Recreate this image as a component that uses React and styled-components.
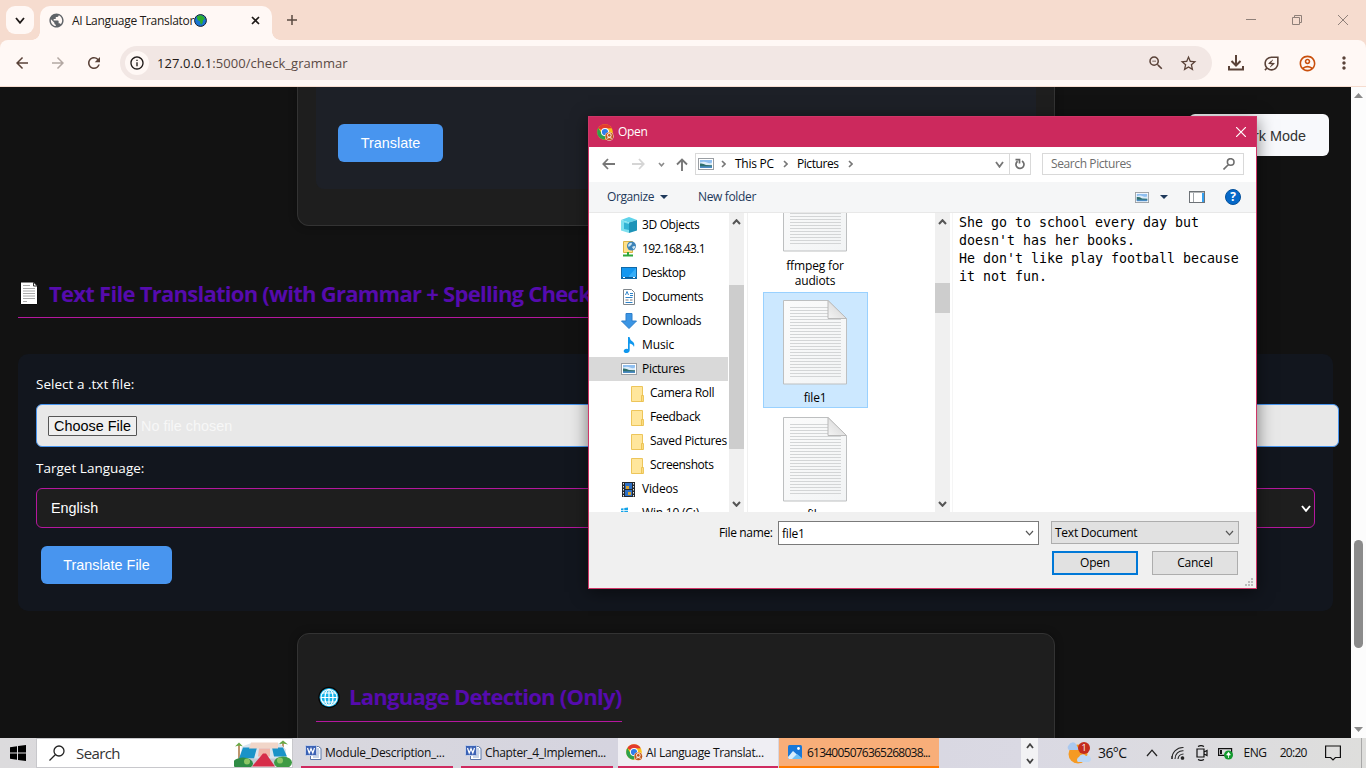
import React from "react";
import styled, { createGlobalStyle, css } from "styled-components";
import {
  MdArrowBack,
  MdArrowForward,
  MdRefresh,
  MdStarBorder,
  MdZoomOut,
  MdPublic,
  MdOutlineEnergySavingsLeaf,
  MdInfoOutline,
  MdOutlineAccountCircle,
  MdMoreVert,
} from "react-icons/md";

const Global = createGlobalStyle`
  * { box-sizing: border-box; }
  body { margin: 0; overflow: hidden; background: #121212; }
  svg { display: block; flex: none; }
`;

const ui = `"Segoe UI", "Open Sans", "Noto Sans", sans-serif`;
const arial = `Arial, "Liberation Sans", sans-serif`;

const Screen = styled.div`
  position: relative;
  width: 1366px;
  height: 768px;
  overflow: hidden;
  display: flex;
  flex-direction: column;
  font-family: ${ui};
  font-size: 12px;
  color: #000;
`;

const Text = styled.span`
  white-space: nowrap;
  flex: none;
  font-size: ${(p) => p.$size || 12}px;
  letter-spacing: ${(p) => p.$ls || 0}px;
  color: ${(p) => p.$color || "inherit"};
  margin-left: ${(p) => p.$ml || 0}px;
  padding-bottom: ${(p) => p.$lift || 0}px;
`;

/* ---------- browser chrome ---------- */
const TabStrip = styled.div`
  height: 40px;
  flex: none;
  display: flex;
  background: #f6dccf;
`;
const TabSearch = styled.div`
  margin: 6px 0 0 6px;
  width: 28px;
  height: 28px;
  border-radius: 9px;
  background: #fff8f5;
  display: grid;
  place-items: center;
`;
const Tab = styled.div`
  position: relative;
  margin: 6px 0 0 6px;
  width: 232px;
  height: 34px;
  padding-left: 8px;
  border-radius: 10px 10px 0 0;
  background: #fff8f5;
  display: flex;
  align-items: center;
  padding-bottom: 6px;
  &::before,
  &::after {
    content: "";
    position: absolute;
    bottom: 0;
    width: 8px;
    height: 8px;
  }
  &::before {
    left: -8px;
    background: radial-gradient(circle at 0 0, transparent 7.5px, #fff8f5 8px);
  }
  &::after {
    right: -8px;
    background: radial-gradient(circle at 100% 0, transparent 7.5px, #fff8f5 8px);
  }
`;
const TabClose = styled.div`
  margin-left: auto;
  margin-right: 12px;
`;
const NewTab = styled.div`
  margin: 14px 0 0 14px;
`;
const WindowButtons = styled.div`
  margin: 15px 18px 0 auto;
  display: flex;
  gap: 36px;
`;
const ToolbarBack = styled.div`
  height: 47px;
  flex: none;
  background: #f6dccf;
`;
const Toolbar = styled.div`
  height: 46px;
  border-radius: 8px 8px 0 0;
  background: #fff8f5;
  display: flex;
  align-items: center;
  padding-left: 13px;
  color: #5a4238;
`;
const NavIcons = styled.div`
  display: flex;
  gap: 18px;
  width: 107px;
`;
const Omnibox = styled.div`
  width: 1092px;
  height: 34px;
  border-radius: 17px;
  background: #f2e7e4;
  display: flex;
  align-items: center;
  padding: 0 14px 0 5px;
`;
const InfoCircle = styled.div`
  width: 24px;
  height: 24px;
  border-radius: 12px;
  background: #fff8f5;
  display: grid;
  place-items: center;
  color: #1f1a18;
`;
const OmniActions = styled.div`
  margin-left: auto;
  display: flex;
  align-items: center;
  gap: 14px;
`;
const ToolActions = styled.div`
  margin-left: 15px;
  display: flex;
  align-items: center;
  gap: 17px;
`;

/* ---------- page ---------- */
const Viewport = styled.div`
  height: 651px;
  flex: none;
  display: flex;
  background: #121212;
`;
const Page = styled.div`
  width: 1351px;
  display: flex;
  flex-direction: column;
  overflow: hidden;
`;
const PageScroll = styled.div`
  width: 15px;
  background: #fcfcfc;
  display: flex;
  flex-direction: column;
  align-items: center;
  padding: 6px 0;
`;
const PageThumb = styled.div`
  margin-top: 442px;
  margin-bottom: auto;
  width: 9px;
  height: 108px;
  border-radius: 5px;
  background: #8b8b8b;
`;
const Card = styled.section`
  margin-left: 297px;
  width: 758px;
  flex: none;
  background: #1e1e1e;
  border: 1px solid #333;
  padding: 0 18px;
  box-shadow: 0 0 8px rgba(0, 0, 0, 0.3);
  ${(p) =>
    p.$lower
      ? css`
          margin-top: 22px;
          height: 140px;
          border-radius: 12px 12px 0 0;
          padding-top: 42px;
        `
      : css`
          height: 139px;
          border-top: 0;
          border-radius: 0 0 12px 12px;
        `}
`;
const CardPanel = styled.div`
  height: 102px;
  border-radius: 0 0 8px 8px;
  background: #1d2027;
  padding: 37px 22px;
`;
const PrimaryButton = styled.button`
  display: block;
  height: 38px;
  width: ${(p) => p.$w}px;
  border: 0;
  padding: 0;
  border-radius: 6px;
  background: #4895ef;
  color: #fff;
  font: 14.4px ${arial};
`;
const Heading = styled.h2`
  margin: ${(p) => p.$m || "0"};
  width: ${(p) => p.$w}px;
  height: ${(p) => p.$h}px;
  flex: none;
  border-bottom: 1px solid ${(p) => p.$line || "#b5179e"};
  display: flex;
  align-items: flex-start;
  color: #560bad;
  font-size: 22px;
  font-weight: 700;
  line-height: 30px;
`;
const HeadingText = styled.div`
  margin-top: ${(p) => p.$mt}px;
`;
const FilePanel = styled.section`
  margin: 36px 0 0 18px;
  width: 1315px;
  height: 257px;
  flex: none;
  border-radius: 10px;
  background: #12161e;
  padding: 20px 18px;
  color: #fff;
  display: flex;
  flex-direction: column;
`;
const FieldLabel = styled.label`
  height: 20px;
  line-height: 20px;
  font-size: 13.5px;
  letter-spacing: ${(p) => p.$ls}px;
  margin-top: ${(p) => p.$mt || 0}px;
`;
const FileInput = styled.div`
  margin-top: 10px;
  width: 1303px;
  height: 43px;
  flex: none;
  border: 1px solid #4895ef;
  border-radius: 6px;
  background: #e8e8e8;
  display: flex;
  align-items: center;
  padding-left: 11px;
  font: 14.4px ${arial};
  color: #f7f7f7;
`;
const ChooseButton = styled.span`
  width: 89px;
  height: 20px;
  margin-right: 4px;
  border: 1px solid #555;
  border-radius: 1px;
  background: #efefef;
  color: #000;
  text-align: center;
  line-height: 18px;
  white-space: nowrap;
`;
const Select = styled.div`
  margin: 10px 0 18px;
  width: 1279px;
  height: 40px;
  flex: none;
  border: 1px solid #b5179e;
  border-radius: 6px;
  background: #1e1e1e;
  display: flex;
  align-items: center;
  justify-content: space-between;
  padding: 0 3px 0 14px;
  font: 14.4px ${arial};
`;
const FileSubmit = styled.div`
  padding-left: 5px;
`;
const ModeButton = styled.button`
  position: absolute;
  left: 1189px;
  top: 114px;
  width: 140px;
  height: 42px;
  padding: 2px 23px 0 0;
  text-align: right;
  border: 0;
  border-radius: 6px;
  background: #f8f9fc;
  color: #333;
  font: 14.4px ${arial};
`;

/* ---------- file dialog ---------- */
const Dialog = styled.div`
  position: absolute;
  left: 588px;
  top: 116px;
  width: 669px;
  height: 473px;
  border: 1px solid #cf3567;
  background: #fff;
  display: flex;
  flex-direction: column;
  box-shadow: 0 3px 16px rgba(0, 0, 0, 0.5);
`;
const TitleBar = styled.div`
  height: 30px;
  flex: none;
  background: #cc295d;
  color: #fff;
  display: flex;
  align-items: center;
  padding: 0 10px 0 8px;
`;
const Push = styled.div`
  margin-left: auto;
`;
const NavRow = styled.div`
  height: 35px;
  flex: none;
  display: flex;
  align-items: center;
  padding: 0 12px 1px 13px;
`;
const Arrows = styled.div`
  width: 93px;
  display: flex;
  align-items: center;
`;
const AddressBox = styled.div`
  width: 315px;
  height: 22px;
  border: 1px solid #d9d9d9;
  display: flex;
  align-items: center;
  padding: 0 5px 0 2px;
`;
const RefreshBox = styled.div`
  width: 21px;
  height: 22px;
  border: 1px solid #d9d9d9;
  border-left: 0;
  display: grid;
  place-items: center;
`;
const SearchBox = styled.div`
  margin-left: auto;
  width: 202px;
  height: 22px;
  border: 1px solid #d9d9d9;
  display: flex;
  align-items: center;
  padding: 0 8px;
  color: #6d6d6d;
`;
const CommandBar = styled.div`
  height: 31px;
  flex: none;
  background: #f5f6f7;
  border-bottom: 1px solid #e8e8e8;
  display: flex;
  align-items: center;
  padding: 0 15px 0 18px;
  color: #1e395b;
`;
const CommandIcons = styled.div`
  margin-left: auto;
  display: flex;
  align-items: center;
`;
const Body = styled.div`
  height: 299px;
  flex: none;
  display: flex;
  overflow: hidden;
`;
const Tree = styled.div`
  width: 139px;
  overflow: hidden;
  margin-right: 1px;
`;
const TreeRow = styled.div`
  height: 24px;
  display: flex;
  align-items: center;
  padding-left: ${(p) => (p.$child ? 42 : 32)}px;
  background: ${(p) => (p.$active ? "#d9d9d9" : "transparent")};
`;
const TreeIcon = styled.span`
  width: ${(p) => (p.$child ? 19 : 21)}px;
  display: flex;
`;
const ScrollTrack = styled.div`
  width: 15px;
  background: #f0f0f0;
  display: flex;
  flex-direction: column;
  align-items: center;
  padding: 6px 0 5px;
`;
const ScrollThumb = styled.div`
  margin-top: ${(p) => p.$top}px;
  margin-bottom: auto;
  width: 15px;
  height: ${(p) => p.$h}px;
  background: #cdcdcd;
`;
const Files = styled.div`
  margin-left: 3px;
  border-left: 1px solid #f0f0f0;
  width: 188px;
  padding-left: 15px;
  overflow: hidden;
`;
const FileTile = styled.div`
  width: 105px;
  height: ${(p) => p.$h}px;
  display: flex;
  flex-direction: column;
  align-items: flex-start;
  border: ${(p) => (p.$first ? 0 : 1)}px solid ${(p) => (p.$active ? "#99d1ff" : "transparent")};
  background: ${(p) => (p.$active ? "#cce8ff" : "transparent")};
  padding: ${(p) => p.$pt || 0}px 0 0 ${(p) => (p.$first ? 20 : 19)}px;
  margin-top: ${(p) => p.$mt || 0}px;
`;
const TileName = styled.div`
  width: 64px;
  margin-top: ${(p) => (p.$mt === undefined ? 5 : p.$mt)}px;
  font-size: 12px;
  line-height: 15px;
  letter-spacing: ${(p) => p.$ls || -0.2}px;
  text-align: center;
  white-space: pre;
`;
const Preview = styled.pre`
  margin: 0 0 0 2px;
  border-left: 1px solid #f5f5f5;
  padding: 1px 0 0 6px;
  flex: 1;
  font: 13.29px/18px Consolas, "DejaVu Sans Mono", monospace;
  color: #000;
`;
const Footer = styled.div`
  flex: 1;
  background: #f0f0f0;
  display: flex;
  flex-direction: column;
  padding: 9px 17px 0 130px;
  position: relative;
`;
const FooterRow = styled.div`
  display: flex;
  align-items: flex-start;
  height: 30px;
`;
const NameLabel = styled.div`
  width: 59px;
  line-height: 23px;
`;
const Combo = styled.div`
  width: ${(p) => p.$w}px;
  height: ${(p) => p.$h}px;
  border: 1px solid ${(p) => (p.$grey ? "#adadad" : "#7a7a7a")};
  background: ${(p) => (p.$grey ? "#e1e1e1" : "#fff")};
  margin-left: ${(p) => (p.$grey ? 12 : 0)}px;
  display: flex;
  align-items: center;
  justify-content: space-between;
  padding: 0 4px 0 3px;
`;
const ButtonRow = styled.div`
  display: flex;
  justify-content: flex-end;
  gap: 14px;
  padding-right: 1px;
`;
const WinButton = styled.button`
  width: 86px;
  height: 24px;
  padding: 0 0 2px;
  background: #e1e1e1;
  border: ${(p) => (p.$primary ? "2px solid #0078d7" : "1px solid #adadad")};
  font: 12px ${ui};
  letter-spacing: -0.25px;
  color: #000;
`;
const Grip = styled.div`
  position: absolute;
  right: 3px;
  bottom: 2px;
`;

/* ---------- taskbar ---------- */
const Taskbar = styled.div`
  height: 30px;
  flex: none;
  background: linear-gradient(90deg, #dcdbdd, #d5d4df 45%, #dad9e3 75%, #dededc);
  display: flex;
`;
const Start = styled.div`
  width: 36px;
  padding: 7px 0 0 10px;
`;
const TaskSearch = styled.div`
  width: 257px;
  height: 30px;
  background: #fff;
  border: 1px solid #c8c8cc;
  display: flex;
  align-items: center;
  padding-left: 12px;
  color: #333;
`;
const Task = styled.div`
  width: ${(p) => p.$w}px;
  margin-left: ${(p) => p.$ml}px;
  border-bottom: 2px solid ${(p) => p.$line || "#cf2a60"};
  background: ${(p) => p.$bg || "transparent"};
  display: flex;
  align-items: center;
  padding-left: ${(p) => p.$pl || 4}px;
  color: #111;
`;
const UpDown = styled.div`
  margin-left: 82px;
  width: 17px;
  background: #f2f2f4;
  display: flex;
  flex-direction: column;
  align-items: center;
  justify-content: space-between;
  padding: 5px 0 4px;
`;
const Tray = styled.div`
  margin-left: 28px;
  display: flex;
  align-items: center;
  flex: 1;
  color: #111;
`;
const TrayItem = styled.div`
  margin-left: ${(p) => p.$ml || 0}px;
`;
const ShowDesktop = styled.div`
  margin-left: auto;
  width: 5px;
  align-self: stretch;
  border-left: 1px solid #a8a8a8;
`;

/* ---------- drawings ---------- */
const Stroke = ({ w = 16, h = 16, d, c = "#555", s = 1.5, vb, fill = "none" }) => (
  <svg width={w} height={h} viewBox={vb || `0 0 ${w} ${h}`} fill={fill} stroke={c} strokeWidth={s}>
    <path d={d} />
  </svg>
);
const Chevron = ({ up, c = "#555", s = 2, w = 9, h = 6 }) => (
  <Stroke w={w} h={h} c={c} s={s} d={up ? `M1 ${h - 1}L${w / 2} 1.2L${w - 1} ${h - 1}` : `M1 1L${w / 2} ${h - 1.2}L${w - 1} 1`} />
);
const PictureIcon = ({ w = 16, h = 12 }) => (
  <svg width={w} height={h} viewBox="0 0 16 12" preserveAspectRatio="none">
    <rect x=".5" y=".5" width="15" height="11" fill="#fff" stroke="#9a9ea3" />
    <rect x="2" y="2" width="12" height="8" fill="#8fbff0" />
    <path d="M2 4.500q4-1.500 7 0t5 0V8H2z" fill="#dcecf9" />
    <path d="M2 5.500q3-.5 6 1.500l6 .3V9H2z" fill="#2f6f6c" />
    <path d="M2 8.300h12V10H2z" fill="#4c8cc4" />
  </svg>
);
const ChromeIcon = () => (
  <svg width="17" height="17" viewBox="0 0 17 17">
    <circle cx="8" cy="8" r="7.800" fill="#fbc116" />
    <path d="M8 8L1.200 4.200A7.800 7.800 0 0 1 14.800 4.200L8 4.500z" fill="#e33b2e" />
    <path d="M1.250 4.100A7.800 7.800 0 0 0 7.500 15.800L10.600 10.500 5 10z" fill="#2da14c" />
    <circle cx="8" cy="8" r="4" fill="#fff" />
    <circle cx="8" cy="8" r="3.100" fill="#2f7de9" />
    <circle cx="12.300" cy="12.300" r="4.400" fill="#f5e6d8" />
    <circle cx="12.300" cy="12.300" r="3.900" fill="#c2571c" />
    <circle cx="12.300" cy="11.300" r="1.900" fill="none" stroke="#fff" strokeWidth=".9" />
    <path d="M9.800 14.300q2.500-1.600 5 0" stroke="#fff" fill="none" strokeWidth=".9" />
  </svg>
);
const DocumentSheet = ({ h = 85 }) => (
  <svg width="64" height={h} viewBox={`0 ${85 - h} 64 ${h}`}>
    <defs>
      <linearGradient id="sheet" x1="0" y1="0" x2="1" y2="1">
        <stop offset="0" stopColor="#fbfbfb" />
        <stop offset="1" stopColor="#f2f4f5" />
      </linearGradient>
      <linearGradient id="fold" x1="0" y1="1" x2="1" y2="0">
        <stop offset="0" stopColor="#f4f4f4" />
        <stop offset="1" stopColor="#cfcfcf" />
      </linearGradient>
    </defs>
    <path d="M.500.500H45L63.500 19V84H.500z" fill="url(#sheet)" stroke="#bdbfc0" />
    {Array.from({ length: 24 }, (_, i) => (
      <path key={i} d={`M7 ${7.5 + i * 3}H${i < 4 ? 45 : 58}`} stroke="#d3d5d6" />
    ))}
    <path d="M45 .500L63.500 18.500H45z" fill="url(#fold)" stroke="#b9b9b9" />
  </svg>
);
const FolderIcon = () => (
  <svg width="14" height="17" viewBox="0 0 14 17">
    <path d="M.500 1.500h11v15H.500z" fill="#ffe69c" stroke="#edc55a" />
    <path d="M10.500 10.500h2v6h-2z" fill="#fbdc7f" stroke="#e9bd48" strokeWidth=".8" />
  </svg>
);
const WordIcon = () => (
  <svg width="17" height="17" viewBox="0 0 17 17">
    <path d="M5.500 2.500h8l2.500 2v11H5.500z" fill="#fff" stroke="#5a76a8" />
    <path d="M8 5h6M8 11h6M8 13h6M12 7h2.500M12 9h2.500" stroke="#8fa8d0" />
    <rect x=".5" y="1.500" width="11" height="10" rx="1" fill="#3b62b5" stroke="#c3d0ea" />
    <path d="M2.500 4l1.700 5L6 4.500 7.800 9l1.700-5" fill="none" stroke="#fff" strokeWidth="1.200" />
  </svg>
);
const treeIcons = {
  cube: (
    <svg width="16" height="16" viewBox="0 0 16 16">
      <path d="M0 3L8 0l8 3-8 2.500z" fill="#5fd3ea" />
      <path d="M0 3l8 2.500V16l-8-2.500z" fill="#7fe0ef" />
      <path d="M16 3L8 5.500V16l8-2.500z" fill="#1c93b8" />
      <path d="M3 5.500l5 1.500v6l-5-1z" fill="#33b3d4" />
    </svg>
  ),
  net: (
    <svg width="16" height="16" viewBox="0 0 16 16">
      <path d="M2.500.500h9v11h-9z" fill="#ffe08a" stroke="#dcb443" />
      <circle cx="10.500" cy="5" r="4.500" fill="#3d84b8" />
      <path d="M7 4q2-3 4-2 0 2-2 3t-1 2zM11 6q3-2 3.500 0l-2 2.500z" fill="#cfe6f2" />
      <path d="M7 11v3M2 14.500h10" stroke="#2fa83c" strokeWidth="2" />
    </svg>
  ),
  desktop: (
    <svg width="16" height="12" viewBox="0 0 16 12">
      <rect x=".5" y=".5" width="15" height="11" fill="#1397f0" stroke="#1069a8" />
      <path d="M8 9L15 1v9H8z" fill="#35adf8" />
      <path d="M1 10.500h14" stroke="#0b5c98" />
      <path d="M2 10.500h2M12 10.500h2" stroke="#fff" />
    </svg>
  ),
  doc: (
    <svg width="16" height="16" viewBox="0 0 16 16">
      <path d="M2.500.500h8l3 3v12h-11z" fill="#fff" stroke="#7f868c" />
      <path d="M4.500 6l1.500-3.500L7.500 6M9 4.500h3M9 6.500h3M4.500 8.500h7M4.500 13.500h7" fill="none" stroke="#2e83c9" />
      <path d="M4.500 11h3M9 11h2.500" stroke="#777" />
    </svg>
  ),
  down: (
    <svg width="16" height="16" viewBox="0 0 16 16">
      <path d="M5 .500h6V8h4.500L8 15.500.500 8H5z" fill="#3b95e4" stroke="#2d7fcb" />
    </svg>
  ),
  music: (
    <svg width="16" height="16" viewBox="0 0 16 16">
      <path d="M7 0h1.500q.5 3 3 4.500T13 10q-.8-3-4.300-3.500V13q0 2.500-3 3-3 0-3-2t3-2.300L7 12z" fill="#0f97ee" />
    </svg>
  ),
  pic: <PictureIcon />,
  folder: <FolderIcon />,
  video: (
    <svg width="15" height="15" viewBox="0 0 15 15">
      <rect x="1" width="13" height="15" fill="#23272b" />
      <path d="M2.500 1v14M12.500 1v14" stroke="#e6e6e6" strokeDasharray="1.500 1.500" />
      <path d="M4 1h7v6H4zM4 8h7v6H4z" fill="#2d6fc4" />
      <path d="M5 4h3v3H5zM7 10h3v3H7z" fill="#d9a22c" />
    </svg>
  ),
  win: (
    <svg width="16" height="16" viewBox="0 0 16 16">
      <path d="M0 3.500l2.500-.3V5H0zM3.300 3L7 2.600V5H3.300zM0 5.800h2.500v2H0zM3.300 5.800H7v2H3.300z" fill="#14a3e8" />
      <rect y="10" width="16" height="5" fill="#9aa0a6" />
    </svg>
  ),
};

const treeItems = [
  ["cube", "3D Objects", -0.35],
  ["net", "192.168.43.1", -0.7],
  ["desktop", "Desktop", -0.4],
  ["doc", "Documents", -0.35],
  ["down", "Downloads", -0.4],
  ["music", "Music", -0.1],
  ["pic", "Pictures", -0.3],
  ["folder", "Camera Roll", -0.3],
  ["folder", "Feedback", -0.35],
  ["folder", "Saved Pictures", -0.33],
  ["folder", "Screenshots", -0.45],
  ["video", "Videos", -0.2],
  ["win", "Win 10 (C:)", -0.2],
];

const GlobeEmoji = () => (
  <svg width="13" height="13" viewBox="0 0 13 13">
    <circle cx="6.500" cy="6.500" r="5.900" fill="#1b73d2" stroke="#17222c" />
    <path d="M3 2.500q2-1.500 4-1.300 3 .5 4 3.500-1 .5-2 1.500 0 3-1.800 4.500-1.200-1-1.200-3.500Q3.500 6.500 3 4.500z" fill="#2cae2c" />
  </svg>
);

function BrowserChrome() {
  return (
    <>
      <TabStrip>
        <TabSearch>
          <Chevron c="#1f1a18" s={1.8} w={10} h={7} />
        </TabSearch>
        <Tab>
          <MdPublic size={17} color="#5f6368" />
          <Text $ml={7} $ls={-0.3} $color="#241a16">AI Language Translator</Text>
          <GlobeEmoji />
          <TabClose>
            <Stroke w={9} h={9} c="#1f1a18" s={1.7} d="M1 1l7 7M8 1L1 8" />
          </TabClose>
        </Tab>
        <NewTab>
          <Stroke w={12} h={12} c="#5a4a42" s={1.5} d="M6 1v10M1 6h10" />
        </NewTab>
        <WindowButtons>
          <Stroke w={10} h={10} c="#8f8079" s={1} d="M0 4.500h10" />
          <Stroke w={10} h={10} c="#8f8079" s={1} d="M.5 2.500h7v7h-7zM2.500 2.500v-2h7v7h-2" />
          <Stroke w={10} h={10} c="#8f8079" s={1} d="M0 0l10 10M10 0L0 10" />
        </WindowButtons>
      </TabStrip>
      <ToolbarBack>
        <Toolbar>
          <NavIcons>
            <MdArrowBack size={18} />
            <MdArrowForward size={18} color="#b3a8a3" />
            <MdRefresh size={18} />
          </NavIcons>
          <Omnibox>
            <InfoCircle>
              <MdInfoOutline size={16} />
            </InfoCircle>
            <Text $size={13} $ml={8} $ls={0.05} $color="#241a16">127.0.0.1</Text>
            <Text $size={13} $ls={0.05} $color="#5a4a44">:5000/check_grammar</Text>
            <OmniActions>
              <MdZoomOut size={18} />
              <MdStarBorder size={19} />
            </OmniActions>
          </Omnibox>
          <ToolActions>
            <Stroke w={18} h={18} s={2} c="#5a4238" d="M9 1v10M4.500 7L9 11.500 13.500 7M2 12v3.500h14V12" />
            <MdOutlineEnergySavingsLeaf size={19} />
            <MdOutlineAccountCircle size={19} color="#c94f0c" />
            <MdMoreVert size={20} />
          </ToolActions>
        </Toolbar>
      </ToolbarBack>
    </>
  );
}

function PageView() {
  return (
    <Viewport>
      <Page>
        <Card>
          <CardPanel>
            <PrimaryButton $w={105}>Translate</PrimaryButton>
          </CardPanel>
        </Card>
        <Heading $m="52px 0 0 18px" $w={600} $h={40}>
          <svg width="24" height="30" viewBox="0 0 24 30">
            <path d="M2.500 4h13L19.500 8V26.500h-17z" fill="#fff" stroke="#0a0a0a" />
            <path d="M15.500 4.500v3.500H19" fill="none" stroke="#333" />
            <path d="M5 7.500h7M5 10.500h12M5 13h12M5 15.500h12M5 18h12M5 20.500h12M5 23.500h4" stroke="#aaa" />
          </svg>
          <HeadingText>
            <Text $size={22} $ml={7} $ls={-0.73}>Text File Translation (with Grammar + Spelling Check)</Text>
          </HeadingText>
        </Heading>
        <FilePanel>
          <FieldLabel $ls={0.02}>Select a .txt file:</FieldLabel>
          <FileInput>
            <ChooseButton>Choose File</ChooseButton>
            No file chosen
          </FileInput>
          <FieldLabel $mt={11} $ls={0.02}>Target Language:</FieldLabel>
          <Select>
            English
            <Chevron c="#fff" s={1.9} w={10} h={7} />
          </Select>
          <FileSubmit>
            <PrimaryButton $w={131}>Translate File</PrimaryButton>
          </FileSubmit>
        </FilePanel>
        <Card $lower>
          <Heading $w={306} $h={46} $m="0">
            <svg width="26" height="40" viewBox="0 0 26 40">
              <circle cx="13" cy="21.500" r="10.700" fill="#050505" />
              <circle cx="13" cy="21.500" r="9.500" fill="#16b4ea" />
              <g fill="none" stroke="#fff" strokeWidth="1.200">
                <ellipse cx="13" cy="21.500" rx="4" ry="8" />
                <circle cx="13" cy="21.500" r="8" />
                <path d="M13 13.500v16M5 21.500h16M6.500 17h13M6.500 26h13" />
              </g>
            </svg>
            <HeadingText $mt={5}>
              <Text $size={22} $ml={7} $ls={-0.73}>Language Detection (Only)</Text>
            </HeadingText>
          </Heading>
        </Card>
      </Page>
      <PageScroll>
        <Stroke w={9} h={5} c="none" fill="#8b8b8b" d="M0 5L4.500 0 9 5z" />
        <PageThumb />
        <Stroke w={9} h={5} c="none" fill="#8b8b8b" d="M0 0L4.500 5 9 0z" />
      </PageScroll>
    </Viewport>
  );
}

function Scroller({ top, h }) {
  return (
    <ScrollTrack>
      <Chevron up s={2} />
      <ScrollThumb $top={top} $h={h} />
      <Chevron s={2} />
    </ScrollTrack>
  );
}

const Gap = styled.span`
  width: ${(p) => p.$w}px;
  flex: none;
`;
const HelpBadge = styled.span`
  width: 16px;
  height: 16px;
  border-radius: 8px;
  background: #0669c9;
  border: 1px solid #04509b;
  color: #fff;
  font: bold 12px/14px ${ui};
  text-align: center;
`;

function OpenDialog() {
  const crumb = <Stroke w={5} h={8} c="#777" s={1.6} d="M1 1l3 3-3 3" />;
  return (
    <Dialog>
      <TitleBar>
        <ChromeIcon />
        <Text $lift={1} $ml={4} $ls={-0.3}>Open</Text>
        <Push>
          <Stroke w={10} h={10} c="#fff" s={1.2} d="M0 0l10 10M10 0L0 10" />
        </Push>
      </TitleBar>
      <NavRow>
        <Arrows>
          <Stroke w={13} h={12} c="#777" s={1.8} d="M13 6H1.500M6 1L1.300 6 6 11" />
          <Gap $w={17} />
          <Stroke w={13} h={12} c="#d5d5d5" s={1.8} d="M0 6h11.500M7 1l4.700 5L7 11" />
          <Gap $w={13} />
          <Chevron c="#8a8a8a" s={1.6} w={7} h={5} />
          <Gap $w={11} />
          <Stroke w={12} h={13} c="#777" s={1.9} d="M6 13V2M1 6.500L6 1.500l5 5" />
        </Arrows>
        <AddressBox>
          <PictureIcon />
          <Gap $w={7} />
          {crumb}
          <Text $lift={1} $ml={9} $ls={-0.25}>This PC</Text>
          <Gap $w={9} />
          {crumb}
          <Text $lift={1} $ml={9} $ls={-0.4}>Pictures</Text>
          <Gap $w={9} />
          {crumb}
          <Push>
            <Chevron c="#777" s={1.8} w={9} h={7} />
          </Push>
        </AddressBox>
        <RefreshBox>
          <Stroke w={12} h={12} c="#6d6d6d" s={1.7} d="M8 3A4 4 0 1 1 3.600 3.200M1.500 1.600H5.500V5.500" />
        </RefreshBox>
        <SearchBox>
          <Text $lift={1} $ls={-0.4}>Search Pictures</Text>
          <Push>
            <Stroke w={12} h={12} c="#6d6d6d" s={1.6} d="M11 4a3.300 3.300 0 1 0-6.600 0A3.300 3.300 0 0 0 11 4zM5.500 6.500L.5 11.500" />
          </Push>
        </SearchBox>
      </NavRow>
      <CommandBar>
        <Text $lift={1} $ls={-0.4}>Organize</Text>
        <Gap $w={6} />
        <Stroke w={8} h={4} c="none" fill="#1e395b" d="M0 0h8L4 4z" />
        <Text $lift={1} $ml={30} $ls={-0.35}>New folder</Text>
        <CommandIcons>
          <PictureIcon w={14} h={11} />
          <Gap $w={11} />
          <Stroke w={8} h={4} c="none" fill="#1e395b" d="M0 0h8L4 4z" />
          <Gap $w={21} />
          <svg width="16" height="12" viewBox="0 0 16 12">
            <rect x=".5" y=".5" width="15" height="11" fill="#fff" stroke="#6d7277" />
            <path d="M0 1h16" stroke="#6d7277" />
            <path d="M4.500 2v9" stroke="#9ea3a8" />
            <path d="M13 2h2v9h-2z" fill="#35a0f0" />
          </svg>
          <Gap $w={20} />
          <HelpBadge>?</HelpBadge>
        </CommandIcons>
      </CommandBar>
      <Body>
        <Tree>
          {treeItems.map(([icon, name, ls]) => (
            <TreeRow key={name} $child={icon === "folder"} $active={icon === "pic"}>
              <TreeIcon $child={icon === "folder"}>{treeIcons[icon]}</TreeIcon>
              <Text $lift={1} $ls={ls}>{name}</Text>
            </TreeRow>
          ))}
        </Tree>
        <Scroller top={60} h={164} />
        <Files>
          <FileTile $first $h={79}>
            <DocumentSheet h={39} />
            <TileName $mt={6} $ls={-0.15}>{"ffmpeg for\naudiots"}</TileName>
          </FileTile>
          <FileTile $active $h={116} $pt={7}>
            <DocumentSheet />
            <TileName>file1</TileName>
          </FileTile>
          <FileTile $h={116} $pt={7} $mt={1}>
            <DocumentSheet />
            <TileName>file</TileName>
          </FileTile>
        </Files>
        <Scroller top={58} h={30} />
        <Preview>{"She go to school every day but\ndoesn't has her books.\nHe don't like play football because\nit not fun."}</Preview>
      </Body>
      <Footer>
        <FooterRow>
          <NameLabel>
            <Text $ls={-0.35}>File name:</Text>
          </NameLabel>
          <Combo $w={261} $h={24}>
            <Text $ls={-0.2}>file1</Text>
            <Chevron c="#555" s={1.2} w={9} h={6} />
          </Combo>
          <Combo $grey $w={188} $h={23}>
            <Text $ls={-0.25}>Text Document</Text>
            <Chevron c="#555" s={1.2} w={9} h={6} />
          </Combo>
        </FooterRow>
        <ButtonRow>
          <WinButton $primary>Open</WinButton>
          <WinButton>Cancel</WinButton>
        </ButtonRow>
        <Grip>
          <Stroke w={8} h={8} c="none" fill="#bcbcbc" d="M6 0h2v2H6zM3 3h2v2H3zM6 3h2v2H6zM0 6h2v2H0zM3 6h2v2H3zM6 6h2v2H6z" />
        </Grip>
      </Footer>
    </Dialog>
  );
}

function WindowsTaskbar() {
  return (
    <Taskbar>
      <Start>
        <Stroke w={16} h={16} c="none" fill="#000" d="M0 2.200L7 1.200V7.500H0zM8 1L16 0V7.500H8zM0 8.500h7v6.300l-7-1zM8 8.500h8V16l-8-1.100z" />
      </Start>
      <TaskSearch>
        <Stroke w={16} h={16} c="#222" s={1.3} d="M15 6A5 5 0 1 0 5 6a5 5 0 0 0 10 0zM6.500 9.500L.5 15.500" />
        <Text $lift={1} $size={15} $ml={11} $ls={-0.6}>Search</Text>
        <Push>
          <svg width="58" height="28" viewBox="0 0 58 27">
            <path d="M5 5v14M49 3v14" stroke="#a8743f" strokeWidth="1.500" />
            <path d="M1 7l4-4 4 4-4-1zM44 5l5-4 5 4-5-1z" fill="#67a844" />
            <path d="M8 7l8-3h30l6 6v12H5z" fill="#d9e4ee" />
            <path d="M9 8h14l-3 11H5zM38 8h11l4 9H40z" fill="#1a93c8" />
            <path d="M17 3h27v6H15z" fill="#f1d6c9" />
            <path d="M25 9h11v8H24z" fill="#efb6aa" />
            <path d="M14 19h36l6 8H8z" fill="#c5cbd4" />
            <path d="M29 14h3l9 13H18z" fill="#d62c49" />
            <ellipse cx="9" cy="24" rx="10" ry="6" fill="#2f8c45" />
            <ellipse cx="49" cy="23" rx="9" ry="6" fill="#3f9b45" />
            <circle cx="13" cy="22" r="3" fill="#8cc665" />
            <circle cx="46" cy="21" r="3" fill="#8cc665" />
          </svg>
        </Push>
      </TaskSearch>
      <Task $w={152} $ml={8}>
        <WordIcon />
        <Text $ml={3} $ls={-0.32}>Module_Description_...</Text>
      </Task>
      <Task $w={152} $ml={8}>
        <WordIcon />
        <Text $ml={3} $ls={-0.36}>Chapter_4_Implemen...</Text>
      </Task>
      <Task $w={160} $ml={5} $pl={8} $bg="#efeef3">
        <ChromeIcon />
        <Text $ml={3} $ls={-0.36}>AI Language Translat...</Text>
      </Task>
      <Task $w={160} $ml={1} $pl={9} $bg="#f8ae79" $line="#ff7a00">
        <svg width="14" height="14" viewBox="0 0 14 14">
          <rect width="14" height="14" rx="1.500" fill="#1878d8" />
          <path d="M0 12l5-6 9 8H1q-1 0-1-2z" fill="#d7eefc" />
          <path d="M4 14l5-5 5 4-1 1z" fill="#6cc0f5" />
          <circle cx="10.500" cy="3.500" r="1.400" fill="#fff" />
        </svg>
        <Text $ml={5} $ls={-0.77}>6134005076365268038...</Text>
      </Task>
      <UpDown>
        <Chevron up c="#444" s={1.8} w={8} h={6} />
        <Chevron c="#444" s={1.8} w={8} h={6} />
      </UpDown>
      <Tray>
        <svg width="25" height="24" viewBox="0 0 25 24">
          <circle cx="12" cy="13" r="9.500" fill="#f59a23" />
          <path d="M3 9a3 3 0 0 1 0-5 4 4 0 0 1 7-1l3 6z" fill="#a9c8ef" />
          <path d="M12 21a3 3 0 0 1 1-5 4 4 0 0 1 7-1 3 3 0 0 1 3 6z" fill="#bcd7f5" />
          <circle cx="18" cy="7" r="6" fill="#c42b1c" />
          <text x="18" y="10.300" fontSize="9" fill="#fff" textAnchor="middle">1</text>
        </svg>
        <Text $lift={1} $size={14} $ml={7} $ls={-0.6}>36°C</Text>
        <TrayItem $ml={20}>
          <Chevron up c="#222" s={1.3} w={12} h={8} />
        </TrayItem>
        <TrayItem $ml={13}>
          <svg width="14" height="14" viewBox="0 0 14 14" fill="none" stroke="#222" strokeWidth="1.100">
            <path d="M1 13A11 11 0 0 1 12.500 1.500M4 13A8 8 0 0 1 12.500 4.700M7 13a5.500 5.500 0 0 1 5.500-5" />
            <path d="M1 10v3" />
            <circle cx="11.500" cy="12" r="1.300" fill="#222" />
          </svg>
        </TrayItem>
        <TrayItem $ml={11}>
          <Stroke w={12} h={16} c="#111" s={1.2} d="M1 4h7v8H1zM8 7l3-1.500v5L8 9M2 1.500Q5-.2 8 1.500M2 14.500q3 1.700 6 0" />
        </TrayItem>
        <TrayItem $ml={10}>
          <svg width="16" height="14" viewBox="0 0 16 14">
            <path d="M.600 2.600h13v6.800H.600z" fill="none" stroke="#111" strokeWidth="1.200" />
            <path d="M2 4h2v4H2z" fill="#111" />
            <circle cx="10.500" cy="9" r="4.500" fill="#149a2f" />
            <path d="M10.500 6.300L8.700 9h3.600zM10.500 8v4" fill="#fff" stroke="#fff" strokeWidth=".8" />
          </svg>
        </TrayItem>
        <Text $lift={1} $ml={9} $ls={-0.4}>ENG</Text>
        <Text $lift={1} $ml={13} $ls={-0.7}>20:20</Text>
        <TrayItem $ml={18}>
          <Stroke w={16} h={16} c="#111" s={1.2} d="M.6 1h14.800v11.500h-5L8 15l-2.400-2.500h-5z" />
        </TrayItem>
        <ShowDesktop />
      </Tray>
    </Taskbar>
  );
}

export default function App() {
  return (
    <Screen>
      <Global />
      <BrowserChrome />
      <PageView />
      <ModeButton>Dark Mode</ModeButton>
      <OpenDialog />
      <WindowsTaskbar />
    </Screen>
  );
}
